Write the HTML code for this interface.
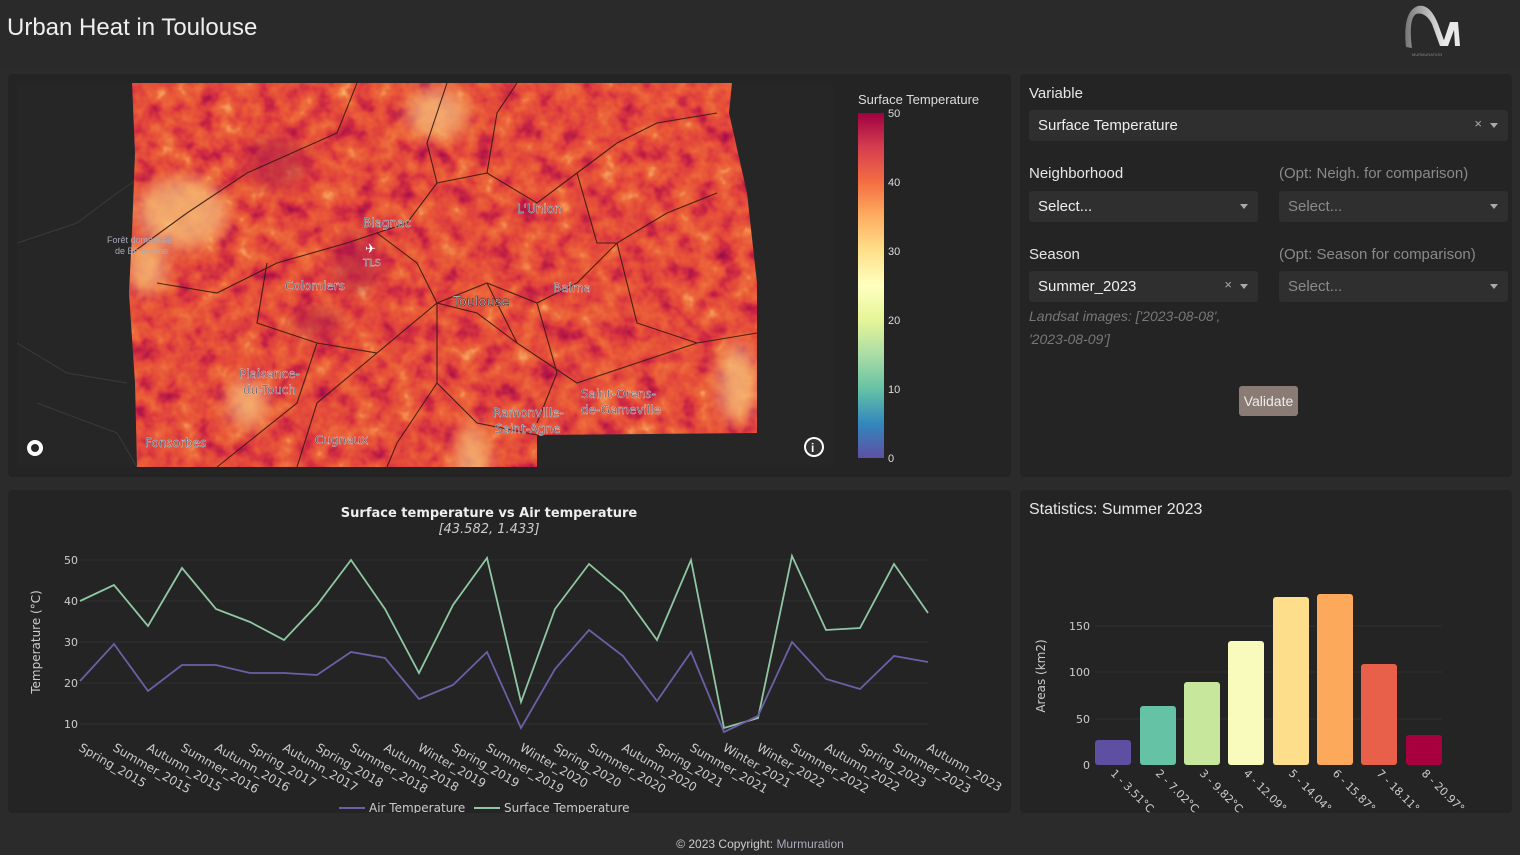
<!DOCTYPE html>
<html><head><meta charset="utf-8">
<style>
*{margin:0;padding:0;box-sizing:border-box}
body{width:1520px;height:855px;background:#2b2b2b;font-family:"Liberation Sans",sans-serif;color:#ddd;position:relative;overflow:hidden}
.hdr{position:absolute;left:0;top:0;width:1520px;height:66px;background:#2a2a2a}
.title{position:absolute;left:7px;top:14px;font-size:24px;color:#eee}
.panel{position:absolute;background:#242424;border-radius:4px}
.lbl{position:absolute;font-size:15px;color:#e6e6e6}
.lbl.dim{color:#8a8a8a}
.sel{position:absolute;height:31px;background:#2f2f2f;border-radius:3px;font-size:15px;color:#eee;padding:7px 9px}
.sel.dim{color:#8a8a8a}
.arr{position:absolute;right:10px;top:13px;width:0;height:0;border-left:4px solid transparent;border-right:4px solid transparent;border-top:5px solid #aaa}
.x{position:absolute;top:6px;font-size:13px;color:#aaa}
</style></head><body>
<div class="hdr"></div>
<div class="title">Urban Heat in Toulouse</div>
<svg style="position:absolute;left:1398px;top:2px" width="72" height="58" viewBox="0 0 72 58">
<defs><linearGradient id="lg" x1="0" x2="1"><stop offset="0" stop-color="#777"/><stop offset="1" stop-color="#eee"/></linearGradient></defs>
<path d="M8 45 C6 25 8 8 20 4 C30 2 36 12 40 22 L48 44 L42 44 L34 22 C30 14 24 10 18 12 C12 16 12 30 14 46Z" fill="url(#lg)"/>
<path d="M44 44 L52 20 L60 20 L62 44 L57 44 L56 28 L50 44Z" fill="#e8e8e8"/>
<text x="14" y="54" font-size="4" fill="#888" font-family="Liberation Sans">MURMURATION</text>
</svg>

<div class="panel" style="left:8px;top:74px;width:1003px;height:403px"></div>
<svg style="position:absolute;left:17px;top:83px" width="816" height="384">
<defs>
<filter id="heat" x="0" y="0" width="100%" height="100%" color-interpolation-filters="sRGB">
<feTurbulence type="fractalNoise" baseFrequency="0.05" numOctaves="3" seed="7"/>
<feColorMatrix type="matrix" values="1 0 0 0 0 1 0 0 0 0 1 0 0 0 0 0 0 0 0 1"/>
<feComponentTransfer>
<feFuncR type="table" tableValues="0.55 0.68 0.8 0.88 0.91 0.93 0.96 0.98"/>
<feFuncG type="table" tableValues="0.04 0.08 0.16 0.26 0.34 0.42 0.62 0.82"/>
<feFuncB type="table" tableValues="0.3 0.28 0.26 0.24 0.22 0.24 0.36 0.5"/>
<feFuncA type="table" tableValues="1 1"/>
</feComponentTransfer>
</filter>
<filter id="bl"><feGaussianBlur stdDeviation="8"/></filter>
<clipPath id="cp"><path d="M115 0 L715 0 L712 30 L730 110 L740 200 L740 350 L520 352 L520 384 L120 384 L118 300 L112 210 L115 150 L118 70Z"/></clipPath>
</defs>
<rect width="816" height="384" fill="#262626"/>
<path d="M0 160 L60 140 L100 110 L130 90 M0 260 L50 290 L110 300 M20 320 L100 350 L120 384" stroke="#3a3a3a" fill="none"/>
<rect width="816" height="384" filter="url(#heat)" clip-path="url(#cp)"/>
<g clip-path="url(#cp)" filter="url(#bl)" fill="#f6c47c" opacity="0.75">
<ellipse cx="165" cy="130" rx="45" ry="35"/><ellipse cx="130" cy="185" rx="20" ry="25"/>
<ellipse cx="455" cy="400" rx="18" ry="60"/><ellipse cx="420" cy="30" rx="30" ry="25"/>
<ellipse cx="720" cy="300" rx="20" ry="40"/><ellipse cx="230" cy="320" rx="20" ry="25"/>
</g>
<g clip-path="url(#cp)" filter="url(#bl)" fill="#a8184a" opacity="0.5">
<ellipse cx="340" cy="180" rx="25" ry="30"/><ellipse cx="260" cy="80" rx="30" ry="25"/><ellipse cx="300" cy="240" rx="25" ry="15"/>
</g>
<g stroke="#3a1a12" stroke-width="1.1" fill="none" opacity="0.9">
<path d="M115 170 L170 130 L230 90 L320 50 L340 0"/>
<path d="M140 200 L200 210 L260 180 L330 160 L390 140 L420 100 L410 60 L430 0"/>
<path d="M250 180 L240 240 L300 260 L360 270 L420 220 L470 200 L520 220 L560 200 L600 160 L650 130 L700 110"/>
<path d="M420 100 L470 90 L480 30 L500 0 M470 90 L520 120 L560 90 L600 60 L640 40 L700 30"/>
<path d="M420 220 L420 300 L460 340 L520 352 M360 270 L300 320 L280 384 M420 300 L380 360 L370 384"/>
<path d="M470 200 L500 260 L560 300 L620 280 L680 260 L740 250 M520 220 L540 290 L520 340"/>
<path d="M600 160 L620 240 L680 260 M560 90 L580 160 L600 160"/>
<path d="M360 150 L400 180 L420 220 L460 230 L500 260 M300 260 L280 320 L230 360 L200 384"/>
</g>
<g font-size="12" fill="#3d3d55" stroke="#ddd" stroke-width="0.4" font-family="DejaVu Sans">
<text x="346" y="144">Blagnac</text><text x="268" y="207">Colomiers</text>
<text x="436" y="223" font-size="13" fill="#eee" stroke="#333" stroke-width="0.6">Toulouse</text>
<text x="500" y="130">L'Union</text><text x="536" y="209">Balma</text>
<text x="222" y="295">Plaisance-</text><text x="226" y="311">du-Touch</text>
<text x="128" y="364">Fonsorbes</text><text x="298" y="361">Cugnaux</text>
<text x="476" y="334">Ramonville-</text><text x="478" y="350">Saint-Agne</text>
<text x="564" y="315">Saint-Orens-</text><text x="564" y="331">de-Gameville</text>
<text x="346" y="183" font-size="10">TLS</text>
</g>
<text x="90" y="160" font-size="9" fill="#aab">Forêt domaniale</text><text x="98" y="171" font-size="9" fill="#aab">de Bouconne</text>
<text x="348" y="170" font-size="13" fill="#fff">✈</text>
<circle cx="18" cy="365" r="8" fill="#fff"/><circle cx="18" cy="365" r="4" fill="#262626"/>
<circle cx="797" cy="364" r="10" fill="#fff"/><circle cx="797" cy="364" r="8" fill="#333"/><text x="794" y="369" font-size="12" fill="#fff" font-weight="bold">i</text>
</svg>
<div style="position:absolute;left:858px;top:92px;font-size:13px;color:#ddd">Surface Temperature</div>
<div style="position:absolute;left:858px;top:113px;width:26px;height:345px;background:linear-gradient(#9e0142,#d53e4f,#f46d43,#fdae61,#fee08b,#ffffbf,#e6f598,#abdda4,#66c2a5,#3288bd,#5e4fa2)"></div>
<div style="position:absolute;left:888px;top:80px;font-size:11px;line-height:69px;color:#ddd">50<br>40<br>30<br>20<br>10<br>0</div>

<div class="panel" style="left:1020px;top:74px;width:492px;height:403px"></div>
<div class="lbl" style="left:1029px;top:85px">Variable</div>
<div class="sel" style="left:1029px;top:110px;width:479px">Surface Temperature<span class="x" style="right:26px">×</span><span class="arr"></span></div>
<div class="lbl" style="left:1029px;top:165px">Neighborhood</div>
<div class="lbl dim" style="left:1279px;top:165px">(Opt: Neigh. for comparison)</div>
<div class="sel" style="left:1029px;top:191px;width:229px">Select...<span class="arr"></span></div>
<div class="sel dim" style="left:1279px;top:191px;width:229px">Select...<span class="arr"></span></div>
<div class="lbl" style="left:1029px;top:246px">Season</div>
<div class="lbl dim" style="left:1279px;top:246px">(Opt: Season for comparison)</div>
<div class="sel" style="left:1029px;top:271px;width:229px">Summer_2023<span class="x" style="right:26px">×</span><span class="arr"></span></div>
<div class="sel dim" style="left:1279px;top:271px;width:229px">Select...<span class="arr"></span></div>
<div style="position:absolute;left:1029px;top:305px;font-size:14px;line-height:23px;color:#777;font-style:italic">Landsat images: ['2023-08-08',<br>'2023-08-09']</div>
<div style="position:absolute;left:1239px;top:386px;width:59px;height:30px;background:#8a7b74;border-radius:3px;color:#eee;font-size:14px;text-align:center;line-height:30px">Validate</div>

<div class="panel" style="left:8px;top:490px;width:1003px;height:323px"></div>
<svg style="position:absolute;left:0;top:490px" width="1010" height="323" font-family="DejaVu Sans">
<text x="489" y="27" text-anchor="middle" font-size="13" font-weight="bold" fill="#eee">Surface temperature vs Air temperature</text>
<text x="489" y="43" text-anchor="middle" font-size="13" font-style="italic" fill="#ccc">[43.582, 1.433]</text>
<g transform="translate(0,-490)">
<g stroke="#303030"><line x1="80" x2="928" y1="560" y2="560"/><line x1="80" x2="928" y1="601" y2="601"/><line x1="80" x2="928" y1="642" y2="642"/><line x1="80" x2="928" y1="683" y2="683"/><line x1="80" x2="928" y1="724" y2="724"/></g>
<g font-size="11" fill="#ccc" text-anchor="end"><text x="78" y="564">50</text><text x="78" y="605">40</text><text x="78" y="646">30</text><text x="78" y="687">20</text><text x="78" y="728">10</text></g>
<text transform="translate(40,642) rotate(-90)" text-anchor="middle" font-size="12" fill="#ccc">Temperature (°C)</text>
<polyline fill="none" stroke="#8fc7a3" stroke-width="1.8" points="80,601 114,585 148,626 182,568 216,609 250,622 284,640 317,605 351,560 385,609 419,673 453,605 487,558 521,702 555,609 589,564 623,593 657,640 691,560 724,728 758,718 792,556 826,630 860,628 894,564 928,613"/>
<polyline fill="none" stroke="#6c5fa6" stroke-width="1.8" points="80,681 114,644 148,691 182,665 216,665 250,673 284,673 317,675 351,652 385,658 419,699 453,685 487,652 521,728 555,669 589,630 623,656 657,701 691,652 724,732 758,716 792,642 826,679 860,689 894,656 928,662"/>
<g font-size="12" fill="#ccc">
<text transform="translate(78,750) rotate(30)">Spring_2015</text><text transform="translate(112,750) rotate(30)">Summer_2015</text><text transform="translate(146,750) rotate(30)">Autumn_2015</text><text transform="translate(180,750) rotate(30)">Summer_2016</text><text transform="translate(214,750) rotate(30)">Autumn_2016</text><text transform="translate(248,750) rotate(30)">Spring_2017</text><text transform="translate(282,750) rotate(30)">Autumn_2017</text><text transform="translate(315,750) rotate(30)">Spring_2018</text><text transform="translate(349,750) rotate(30)">Summer_2018</text><text transform="translate(383,750) rotate(30)">Autumn_2018</text><text transform="translate(417,750) rotate(30)">Winter_2019</text><text transform="translate(451,750) rotate(30)">Spring_2019</text><text transform="translate(485,750) rotate(30)">Summer_2019</text><text transform="translate(519,750) rotate(30)">Winter_2020</text><text transform="translate(553,750) rotate(30)">Spring_2020</text><text transform="translate(587,750) rotate(30)">Summer_2020</text><text transform="translate(621,750) rotate(30)">Autumn_2020</text><text transform="translate(655,750) rotate(30)">Spring_2021</text><text transform="translate(689,750) rotate(30)">Summer_2021</text><text transform="translate(722,750) rotate(30)">Winter_2021</text><text transform="translate(756,750) rotate(30)">Winter_2022</text><text transform="translate(790,750) rotate(30)">Summer_2022</text><text transform="translate(824,750) rotate(30)">Autumn_2022</text><text transform="translate(858,750) rotate(30)">Spring_2023</text><text transform="translate(892,750) rotate(30)">Summer_2023</text><text transform="translate(926,750) rotate(30)">Autumn_2023</text>
</g>
<line x1="339" x2="365" y1="808" y2="808" stroke="#6c5fa6" stroke-width="2"/><text x="369" y="812" font-size="12" fill="#ccc">Air Temperature</text>
<line x1="474" x2="500" y1="808" y2="808" stroke="#8fc7a3" stroke-width="2"/><text x="504" y="812" font-size="12" fill="#ccc">Surface Temperature</text>
</g>
</svg>

<div class="panel" style="left:1020px;top:490px;width:492px;height:323px"></div>
<div style="position:absolute;left:1029px;top:501px;font-size:16px;color:#e6e6e6">Statistics: Summer 2023</div>
<svg style="position:absolute;left:1020px;top:490px" width="492" height="323" font-family="DejaVu Sans">
<g transform="translate(-1020,-490)">
<g stroke="#303030"><line x1="1095" x2="1442" y1="626" y2="626"/><line x1="1095" x2="1442" y1="672" y2="672"/><line x1="1095" x2="1442" y1="719" y2="719"/></g>
<g font-size="11" fill="#ccc" text-anchor="end"><text x="1090" y="630">150</text><text x="1090" y="676">100</text><text x="1090" y="723">50</text><text x="1090" y="769">0</text></g>
<text transform="translate(1045,676) rotate(-90)" text-anchor="middle" font-size="12" fill="#ccc">Areas (km2)</text>
<rect x="1095" y="740" width="36" height="25" rx="3" fill="#5e4fa2"/>
<rect x="1140" y="706" width="36" height="59" rx="3" fill="#66c2a5"/>
<rect x="1184" y="682" width="36" height="83" rx="3" fill="#c6e79c"/>
<rect x="1228" y="641" width="36" height="124" rx="3" fill="#f8fbbb"/>
<rect x="1273" y="597" width="36" height="168" rx="3" fill="#fdde8a"/>
<rect x="1317" y="594" width="36" height="171" rx="3" fill="#fca95c"/>
<rect x="1361" y="664" width="36" height="101" rx="3" fill="#e9604a"/>
<rect x="1406" y="735" width="36" height="30" rx="3" fill="#a8003f"/>
<g font-size="11" fill="#ccc">
<text transform="translate(1110,774) rotate(45)">1 - 3.51°C</text><text transform="translate(1155,774) rotate(45)">2 - 7.02°C</text><text transform="translate(1199,774) rotate(45)">3 - 9.82°C</text><text transform="translate(1243,774) rotate(45)">4 - 12.09°</text><text transform="translate(1288,774) rotate(45)">5 - 14.04°</text><text transform="translate(1332,774) rotate(45)">6 - 15.87°</text><text transform="translate(1376,774) rotate(45)">7 - 18.11°</text><text transform="translate(1421,774) rotate(45)">8 - 20.97°</text>
</g>
</g>
</svg>
<div style="position:absolute;left:0;top:837px;width:1520px;text-align:center;font-size:12px;color:#ccc">© 2023 Copyright: <span style="color:#aab">Murmuration</span></div>
</body></html>
